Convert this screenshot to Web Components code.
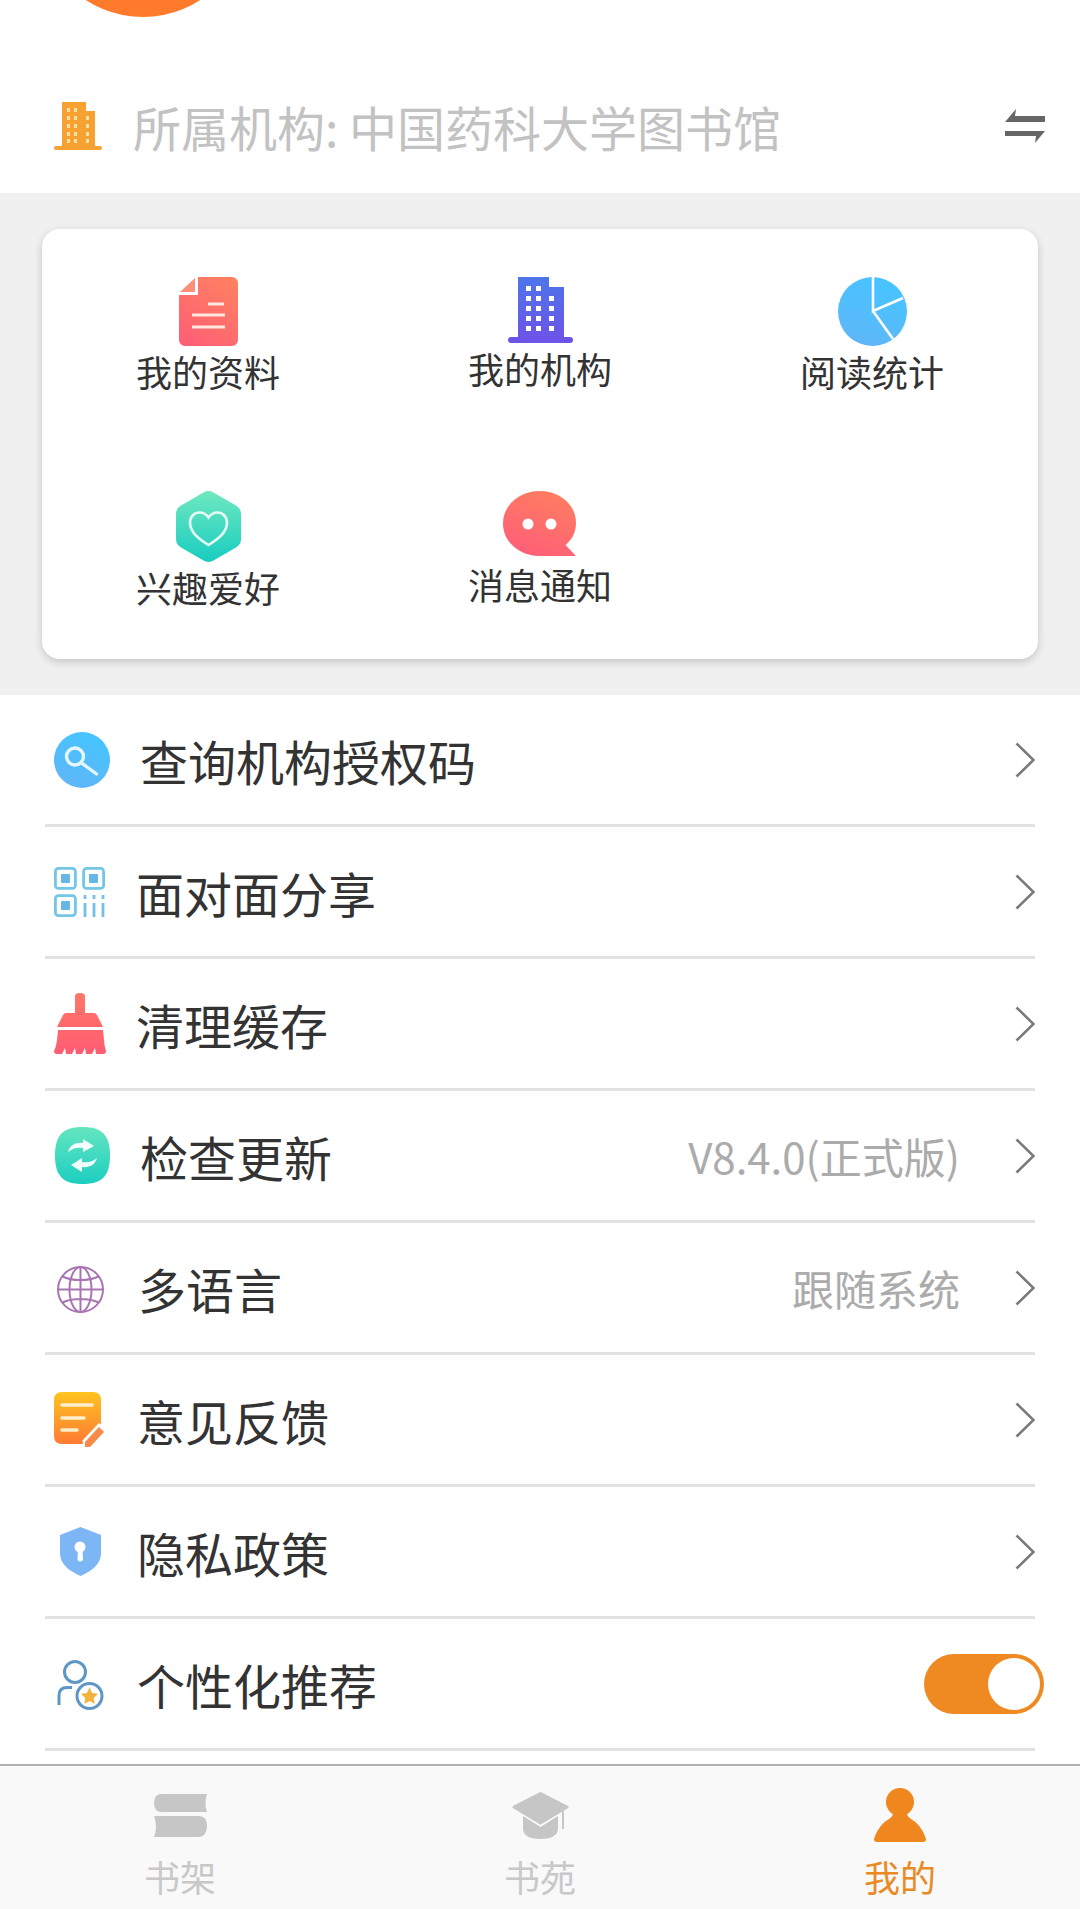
<!DOCTYPE html>
<html lang="zh">
<head>
<meta charset="utf-8">
<title>我的</title>
<style>
  html, body { margin: 0; background: #fff; }
  body { width: 1080px; height: 1909px; overflow: hidden; display: flex; flex-direction: column;
    font-family: "Noto Sans CJK SC", "Noto Sans", sans-serif; color: #333; }
  settings-list { flex: 1; }
</style>
</head>
<body>
<org-header name="所属机构: 中国药科大学图书馆"></org-header>
<shortcut-card>
  <shortcut-item icon="doc" label="我的资料"></shortcut-item>
  <shortcut-item icon="building" label="我的机构"></shortcut-item>
  <shortcut-item icon="pie" label="阅读统计"></shortcut-item>
  <shortcut-item icon="heart" label="兴趣爱好"></shortcut-item>
  <shortcut-item icon="bubble" label="消息通知"></shortcut-item>
</shortcut-card>
<settings-list>
  <settings-row icon="search" ix="9" tx="140">查询机构授权码</settings-row>
  <settings-row icon="qr" ix="9" tx="136">面对面分享</settings-row>
  <settings-row icon="broom" ix="9" tx="136">清理缓存</settings-row>
  <settings-row icon="refresh" ix="10" tx="140" value="V8.4.0(正式版)">检查更新</settings-row>
  <settings-row icon="globe" ix="12" iy="3" tx="138" value="跟随系统">多语言</settings-row>
  <settings-row icon="note" ix="9" tx="137">意见反馈</settings-row>
  <settings-row icon="shield" ix="15" tx="137">隐私政策</settings-row>
  <settings-row icon="person" ix="12" iy="2" tx="137" toggle>个性化推荐</settings-row>
</settings-list>
<tab-bar>
  <tab-item icon="books" label="书架"></tab-item>
  <tab-item icon="cap" label="书苑"></tab-item>
  <tab-item icon="me" label="我的" active></tab-item>
</tab-bar>

<script>
// every icon is drawn inline, sized to what it measures in the reference
const ICONS = {
  org: `<svg width="48" height="48" viewBox="0 0 48 48"><path d="M8 0h24v9h9v37H8z" fill="#f6a233"/><rect y="44" width="48" height="4" rx="2" fill="#f6a233"/><g fill="#ffdf9e"><rect x="13" y="6" width="3" height="4"/><rect x="20" y="6" width="3" height="4"/><rect x="13" y="14" width="3" height="4"/><rect x="20" y="14" width="3" height="4"/><rect x="32" y="14" width="3" height="4"/><rect x="13" y="22" width="3" height="4"/><rect x="20" y="22" width="3" height="4"/><rect x="32" y="22" width="3" height="4"/><rect x="13" y="30" width="3" height="4"/><rect x="20" y="30" width="3" height="4"/><rect x="32" y="30" width="3" height="4"/><rect x="13" y="37" width="3" height="4"/><rect x="20" y="37" width="3" height="4"/><rect x="32" y="37" width="3" height="4"/></g></svg>`,
  swap: `<svg width="40" height="34" viewBox="0 0 40 34"><path d="M0 13L11 0l-1 7h30v6z" fill="#666"/><path d="M0 22h40L30 34l1-7H0z" fill="#666"/></svg>`,
  doc: `<svg width="59" height="69" viewBox="0 0 59 69"><defs><linearGradient id="g" x1=".8" y1="0" x2=".2" y2="1"><stop offset="0" stop-color="#ff7f62"/><stop offset="1" stop-color="#ff6075"/></linearGradient></defs><path d="M19 0h34a6 6 0 0 1 6 6v57a6 6 0 0 1-6 6H6a6 6 0 0 1-6-6V18h19z" fill="url(#g)"/><path d="M16 1v14H1z" fill="#fa8f7a"/><g stroke="#ffe6e0" stroke-width="3.200"><path d="M29 27h16M13 38h33M13 50h33"/></g></svg>`,
  building: `<svg width="65" height="66" viewBox="0 0 65 66"><defs><linearGradient id="g" x1="0" y1="0" x2="0" y2="1"><stop offset="0" stop-color="#4e75ea"/><stop offset="1" stop-color="#6c54e8"/></linearGradient></defs><path d="M10 0h31v10h15v52H10z" fill="url(#g)"/><rect y="60" width="65" height="6" rx="3" fill="#6c54e8"/><g fill="#fff"><rect x="18" y="9" width="5" height="5"/><rect x="28" y="9" width="5" height="5"/><rect x="18" y="19" width="5" height="5"/><rect x="28" y="19" width="5" height="5"/><rect x="41" y="19" width="5" height="5"/><rect x="18" y="29" width="5" height="5"/><rect x="28" y="29" width="5" height="5"/><rect x="41" y="29" width="5" height="5"/><rect x="18" y="39" width="5" height="5"/><rect x="28" y="39" width="5" height="5"/><rect x="41" y="39" width="5" height="5"/><rect x="18" y="49" width="5" height="5"/><rect x="28" y="49" width="5" height="5"/><rect x="41" y="49" width="5" height="5"/></g></svg>`,
  pie: `<svg width="69" height="69" viewBox="0 0 69 69"><defs><linearGradient id="g" x1=".7" y1="0" x2=".3" y2="1"><stop offset="0" stop-color="#45c5ff"/><stop offset="1" stop-color="#5fb6f8"/></linearGradient></defs><circle cx="34.5" cy="34.5" r="34.5" fill="url(#g)"/><path d="M35 0v34l30-13M35 34l20 28" fill="none" stroke="#fff" stroke-width="2.600"/></svg>`,
  heart: `<svg width="65" height="71" viewBox="0 0 65 71"><defs><linearGradient id="g" x1="0" y1="0" x2="0" y2="1"><stop offset="0" stop-color="#6fe8c0"/><stop offset="1" stop-color="#18cdc0"/></linearGradient></defs><path d="M27.500 1.500q5-2.800 10 0L60 14.500q5 3 5 8.500v25q0 5.500-5 8.500L37.500 69.500q-5 2.800-10 0L5 56.500q-5-3-5-8.500V23q0-5.500 5-8.500z" fill="url(#g)"/><path d="M32.500 54C22 47.500 14 41 14 31.500 14 25.500 18.500 21.500 23.500 21.500c4 0 7 2 9 5 2-3 5-5 9-5 5 0 9.500 4 9.500 10 0 9.500-8 16-18.500 22.500z" fill="none" stroke="#e6fbf6" stroke-width="2.600"/></svg>`,
  bubble: `<svg width="74" height="68" viewBox="0 0 74 68"><defs><linearGradient id="g" x1=".7" y1="0" x2=".3" y2="1"><stop offset="0" stop-color="#ff7d60"/><stop offset="1" stop-color="#ff5e78"/></linearGradient></defs><path d="M36.500 0C57 0 73 13.500 73 32c0 10-4.500 17-10.500 22L73 65H36.500C16 65 0 50.500 0 32.500S16 0 36.500 0z" fill="url(#g)"/><circle cx="25" cy="33" r="5.500" fill="#fff"/><circle cx="48" cy="33" r="5.500" fill="#fff"/></svg>`,
  search: `<svg width="56" height="56" viewBox="0 0 56 56"><defs><linearGradient id="g" x1=".7" y1="0" x2=".3" y2="1"><stop offset="0" stop-color="#45c5ff"/><stop offset="1" stop-color="#5fb6f8"/></linearGradient></defs><circle cx="28" cy="28" r="28" fill="url(#g)"/><circle cx="21" cy="24.500" r="8.500" fill="none" stroke="#e4f6ff" stroke-width="3.400"/><path d="M27.500 31l15 11" stroke="#e4f6ff" stroke-width="3.400" stroke-linecap="round"/></svg>`,
  qr: `<svg width="51" height="50" viewBox="0 0 51 50"><g fill="none" stroke="#74c6e6" stroke-width="2.800"><rect x="1.400" y="1.400" width="20" height="20" rx="3"/><rect x="29.600" y="1.400" width="20" height="20" rx="3"/><rect x="1.400" y="28.600" width="20" height="20" rx="3"/></g><g fill="#66b6e6"><rect x="7" y="7" width="9" height="9" rx="1"/><rect x="35" y="7" width="9" height="9" rx="1"/><rect x="7" y="34" width="9" height="9" rx="1"/></g><g stroke="#74bfe6" stroke-width="2.800"><path d="M31 28v4M31 36v14M40 28v4M40 36v14M49 28v4M49 36v14"/></g></svg>`,
  broom: `<svg width="52" height="61" viewBox="0 0 52 61"><defs><linearGradient id="g" gradientUnits="userSpaceOnUse" x1="0" y1="0" x2="0" y2="61"><stop offset="0" stop-color="#ff7868"/><stop offset="1" stop-color="#ff5c72"/></linearGradient></defs><path d="M21 3q0-3 5-3t5 3v17h9q2 0 3 2l6 12H3l6-12q1-2 3-2h9z" fill="url(#g)"/><path d="M4 37h45l1.500 15L52 58q0 3-3 3H42l-1-6-3 6h-6l-1-6-3 6h-6l-1-6-3 6h-6l-1-6-3 6H3q-3 0-3-3 3-5 4-21z" fill="url(#g)"/></svg>`,
  refresh: `<svg width="55" height="57" viewBox="0 0 55 57"><defs><linearGradient id="g" x1="0" y1="0" x2="0" y2="1"><stop offset="0" stop-color="#64e6c0"/><stop offset="1" stop-color="#1dcec0"/></linearGradient></defs><path d="M27.500 0C47 0 55 8 55 28.500S47 57 27.500 57 0 49 0 28.500 8 0 27.500 0z" fill="url(#g)"/><g fill="#f0fffb"><path d="M13 25c2-7 8-10 15-9l0-4 11 7-11 6 0-4c-6-1-10 0-15 4z"/><path d="M42 31c-2 7-8 10-15 9l0 5-11-7 11-7 0 4c6 1 10 0 15-4z"/></g></svg>`,
  globe: `<svg width="47" height="47" viewBox="0 0 47 47"><g fill="none" stroke="#a874b2" stroke-width="2"><circle cx="23.500" cy="23.500" r="22.500"/><ellipse cx="23.500" cy="23.500" rx="11" ry="22.500"/><path d="M23.500 1v45M1 23.500h45M5.500 10.500c5 2.500 11 3.500 18 3.500s13-1 18-3.500M5.500 36.500c5-2.500 11-3.500 18-3.500s13 1 18 3.500"/></g></svg>`,
  note: `<svg width="53" height="56" viewBox="0 0 53 56"><defs><linearGradient id="g" x1="0" y1="0" x2="0" y2="1"><stop offset="0" stop-color="#ffc41f"/><stop offset="1" stop-color="#fd7a34"/></linearGradient></defs><path d="M8 0h31q8 0 8 8v24L30 52H8q-8 0-8-8V8q0-8 8-8z" fill="url(#g)"/><g stroke="#ffeecb" stroke-width="3.500" stroke-linecap="round"><path d="M8 13h30M8 26h22M8 38h15"/></g><path d="M31 56l-1-7 15-16 7 6-15 16z" fill="#fff" stroke="#fff" stroke-width="3"/><path d="M31 55v-5l14-15 5 5-14 15z" fill="#f68a46"/></svg>`,
  shield: `<svg width="41" height="49" viewBox="0 0 41 49"><path d="M20.500 0L41 8v18c0 11-9 18-20.500 23C9 44 0 37 0 26V8z" fill="#7db6f4"/><circle cx="20" cy="20" r="5.500" fill="#fff"/><path d="M18 22h4.500l.5 11q-3 3-5.500 0z" fill="#fff"/></svg>`,
  person: `<svg width="47" height="50" viewBox="0 0 47 50"><g fill="none" stroke="#5e96c6" stroke-width="3"><circle cx="18" cy="12" r="10.500"/><path d="M15 27.500H10q-8 0-8 8V45"/><circle cx="32.500" cy="36" r="12.500"/></g><path d="M32.500 27.500l2.600 5.500 5.900.800-4.300 4.100 1 5.900-5.200-2.800-5.200 2.800 1-5.900-4.300-4.100 5.900-.800z" fill="#f4b13e"/></svg>`,
  books: `<svg width="53" height="43" viewBox="0 0 53 43"><path d="M8 0h45q-3 9 0 18H8q-8 0-8-9t8-9z" fill="#c6c6c6"/><path d="M0 22h45q8 0 8 10t-8 11H0q4-10 0-21z" fill="#c6c6c6"/></svg>`,
  cap: `<svg width="57" height="47" viewBox="0 0 57 47"><path d="M28.500 1.500L55 15 28.500 31 2 15z" fill="#c6c6c6" stroke="#c6c6c6" stroke-width="3" stroke-linejoin="round"/><path d="M11 24l17.500 11L46 24v12q0 11-17.500 11T11 36z" fill="#c6c6c6"/><path d="M51 16v21" stroke="#c6c6c6" stroke-width="2"/></svg>`,
  me: `<svg width="52" height="54" viewBox="0 0 52 54"><ellipse cx="26" cy="14" rx="14" ry="14" fill="#f0871e"/><path d="M20 25h12q2 4 5 6c9 5 13 14 15 20q0 3-3 3H3q-3 0-3-3c2-6 6-15 15-20q3-2 5-6z" fill="#f0871e"/></svg>`
};

class AppIcon extends HTMLElement {
  constructor() {
    super();
    this.attachShadow({ mode: 'open' });
  }
  connectedCallback() {
    this.shadowRoot.innerHTML = `<style>:host{display:block;line-height:0}svg{display:block}</style>${ICONS[this.getAttribute('name')]}`;
  }
}
customElements.define('app-icon', AppIcon);

// white band at the top with the clipped avatar and the organisation line
class OrgHeader extends HTMLElement {
  constructor() {
    super();
    this.attachShadow({ mode: 'open' });
  }
  connectedCallback() {
    this.shadowRoot.innerHTML = `
      <style>
        :host { display: block; height: 193px; background: #fff; position: relative; overflow: hidden; }
        .avatar { position: absolute; left: 38px; top: -193px; width: 210px; height: 210px; border-radius: 50%; background: #ff7a2b; }
        .row { display: flex; align-items: center; padding: 102px 35px 0 54px; }
        .name { flex: 1; margin-left: 31px; font-size: 48px; line-height: 48px; color: #c2c2c2; white-space: nowrap; }
      </style>
      <div class="avatar"></div>
      <div class="row">
        <app-icon name="org"></app-icon>
        <span class="name">${this.getAttribute('name')}</span>
        <app-icon name="swap"></app-icon>
      </div>`;
  }
}
customElements.define('org-header', OrgHeader);

class ShortcutCard extends HTMLElement {
  constructor() {
    super();
    this.attachShadow({ mode: 'open' });
    this.shadowRoot.innerHTML = `
      <style>
        :host { display: block; height: 502px; box-sizing: border-box; padding: 36px 42px; background: #f0f0f0; }
        .card { height: 430px; box-sizing: border-box; padding-top: 48px; background: #fff; border-radius: 18px;
          box-shadow: 0 3px 8px rgba(0,0,0,.18); display: grid; grid-template-columns: repeat(3, 1fr); grid-auto-rows: 214px; }
      </style>
      <div class="card"><slot></slot></div>`;
  }
}
customElements.define('shortcut-card', ShortcutCard);

class ShortcutItem extends HTMLElement {
  constructor() {
    super();
    this.attachShadow({ mode: 'open' });
  }
  connectedCallback() {
    this.shadowRoot.innerHTML = `
      <style>
        :host { display: flex; flex-direction: column; align-items: center; }
        span { font-size: 36px; line-height: 46px; margin-top: 2px; color: #333; }
      </style>
      <app-icon name="${this.getAttribute('icon')}"></app-icon>
      <span>${this.getAttribute('label')}</span>`;
  }
}
customElements.define('shortcut-item', ShortcutItem);

class SettingsList extends HTMLElement {
  constructor() {
    super();
    this.attachShadow({ mode: 'open' });
    this.shadowRoot.innerHTML = `<style>:host{display:block;background:#fff}</style><slot></slot>`;
  }
}
customElements.define('settings-list', SettingsList);

class SettingsRow extends HTMLElement {
  constructor() {
    super();
    this.attachShadow({ mode: 'open' });
  }
  connectedCallback() {
    const ix = Number(this.getAttribute('ix'));
    const iy = Number(this.getAttribute('iy') || 0);
    const tx = Number(this.getAttribute('tx'));
    const value = this.getAttribute('value');
    const end = this.hasAttribute('toggle')
      ? `<toggle-switch checked></toggle-switch>`
      : `${value ? `<span class="value">${value}</span>` : ''}
         <svg class="chev" width="20" height="36" viewBox="0 0 20 36"><path d="M1.500 1.500L18.500 18 1.500 34.500" fill="none" stroke="#7a7a7a" stroke-width="2.600"/></svg>`;
    this.shadowRoot.innerHTML = `
      <style>
        :host { display: block; height: 132px; box-sizing: border-box; padding: 0 45px; }
        .row { height: 132px; box-sizing: border-box; border-bottom: 3px solid #e2e2e2; display: flex; align-items: center; }
        .lead { width: ${tx - 45}px; padding: ${iy}px 0 0 ${ix}px; box-sizing: border-box; flex: none; }
        .title { flex: 1; font-size: 48px; line-height: 60px; color: #333; white-space: nowrap; }
        .value { font-size: 42px; line-height: 52px; color: #ababab; margin-right: 55px; white-space: nowrap; }
        .chev { flex: none; }
        toggle-switch { margin-right: -9px; }
      </style>
      <div class="row">
        <div class="lead"><app-icon name="${this.getAttribute('icon')}"></app-icon></div>
        <span class="title"><slot></slot></span>
        ${end}
      </div>`;
  }
}
customElements.define('settings-row', SettingsRow);

class ToggleSwitch extends HTMLElement {
  constructor() {
    super();
    this.attachShadow({ mode: 'open' });
    this.shadowRoot.innerHTML = `
      <style>
        :host { display: block; flex: none; width: 120px; height: 60px; box-sizing: border-box; padding: 4px; border-radius: 30px; background: #ef8a23; }
        :host([checked]) .knob { margin-left: auto; }
        .track { display: flex; }
        .knob { width: 52px; height: 52px; border-radius: 50%; background: #fff; }
      </style>
      <div class="track"><div class="knob"></div></div>`;
  }
}
customElements.define('toggle-switch', ToggleSwitch);

class TabBar extends HTMLElement {
  constructor() {
    super();
    this.attachShadow({ mode: 'open' });
    this.shadowRoot.innerHTML = `
      <style>
        :host { display: grid; grid-template-columns: repeat(3, 1fr); flex: none; height: 145px; box-sizing: border-box;
          background: #f9f9f9; border-top: 2px solid #b0b0b0; }
      </style>
      <slot></slot>`;
  }
}
customElements.define('tab-bar', TabBar);

class TabItem extends HTMLElement {
  constructor() {
    super();
    this.attachShadow({ mode: 'open' });
  }
  connectedCallback() {
    this.shadowRoot.innerHTML = `
      <style>
        :host { display: flex; flex-direction: column; align-items: center; }
        .ic { height: 54px; margin-top: 22px; display: flex; align-items: center; }
        span { font-size: 36px; line-height: 44px; margin-top: 12px; color: #c8c8c8; }
        :host([active]) span { color: #e98a25; }
      </style>
      <div class="ic"><app-icon name="${this.getAttribute('icon')}"></app-icon></div>
      <span>${this.getAttribute('label')}</span>`;
  }
}
customElements.define('tab-item', TabItem);
</script>
</body>
</html>
